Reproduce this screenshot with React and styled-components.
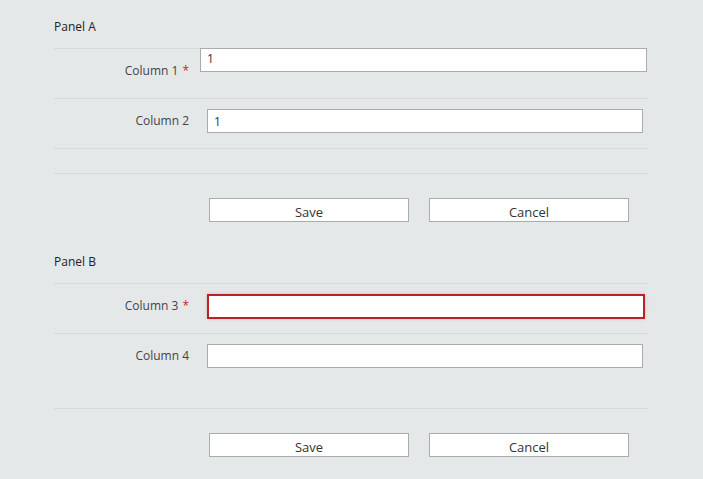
import React from 'react';
import styled, { createGlobalStyle } from 'styled-components';

const GlobalStyle = createGlobalStyle`
  html, body {
    margin: 0;
    padding: 0;
    background: #e5e8e9;
  }
  body {
    font-family: "Open Sans", "Noto Sans", sans-serif;
    color: #333;
  }
`;

const Page = styled.div`
  width: 594px;
  padding-left: 54px;
`;

const Panel = styled.section`
  display: flex;
  flex-direction: column;
`;

const Title = styled.div`
  height: 48px;
  box-sizing: border-box;
  padding-top: 19px;
  font-size: 12px;
  line-height: 16px;
  color: #222;
`;

const Row = styled.div`
  display: flex;
  align-items: flex-start;
  height: ${(p) => p.$height || 50}px;
  box-sizing: border-box;
  border-top: 1px solid #d7dadc;
`;

const Label = styled.label`
  width: 135px;
  flex: none;
  padding-top: 10px;
  font-size: 12px;
  line-height: 24px;
  color: #444;
  text-align: right;
`;

const Star = styled.span`
  color: #c4262e;
  margin-left: 4px;
`;

const Input = styled.input`
  box-sizing: border-box;
  width: ${(p) => (p.$invalid ? 438 : p.$wide ? 447 : 436)}px;
  height: ${(p) => (p.$invalid ? 25 : 24)}px;
  margin: ${(p) => (p.$flush ? '-1px 0 0 11px' : '10px 0 0 18px')};
  padding: 0 6px;
  border: ${(p) => (p.$invalid ? '2px solid #b8232a' : '1px solid #a9acad')};
  box-shadow: ${(p) => (p.$invalid ? '0 0 3px rgba(230, 80, 80, 0.35)' : 'none')};
  background: #fff;
  font-family: inherit;
  font-size: 12px;
  color: #333;
  outline: none;
  line-height: ${(p) => (p.$flush ? '16px' : '22px')};
  padding-bottom: ${(p) => (p.$flush ? '4px' : '0')};
`;

const Spacer = styled.div`
  height: ${(p) => p.$height}px;
  border-top: ${(p) => (p.$ruled ? '1px solid #d7dadc' : 'none')};
  box-sizing: border-box;
`;

const Footer = styled.div`
  display: flex;
  gap: 20px;
  padding: 24px 0 13px 155px;
  border-top: 1px solid #d7dadc;
`;

const Button = styled.button`
  box-sizing: border-box;
  width: 200px;
  height: 24px;
  border: 1px solid #a9acad;
  background: #fff;
  font-family: inherit;
  font-size: 13px;
  line-height: 24px;
  color: #333;
  padding: 1px 0 0;
`;

function Field({ label, required, value, ...rest }) {
  return (
    <>
      <Label>
        {label}
        {required && <Star>*</Star>}
      </Label>
      <Input defaultValue={value} {...rest} />
    </>
  );
}

function Actions() {
  return (
    <Footer>
      <Button>Save</Button>
      <Button>Cancel</Button>
    </Footer>
  );
}

export default function App() {
  return (
    <Page>
      <GlobalStyle />
      <Panel>
        <Title>Panel A</Title>
        <Row>
          <Field label="Column 1" required value="1" $flush $wide />
        </Row>
        <Row>
          <Field label="Column 2" value="1" />
        </Row>
        <Spacer $height={25} $ruled />
        <Actions />
      </Panel>
      <Panel>
        <Title>Panel B</Title>
        <Row>
          <Field label="Column 3" required value="" $invalid />
        </Row>
        <Row $height={75}>
          <Field label="Column 4" value="" />
        </Row>
        <Actions />
      </Panel>
    </Page>
  );
}
